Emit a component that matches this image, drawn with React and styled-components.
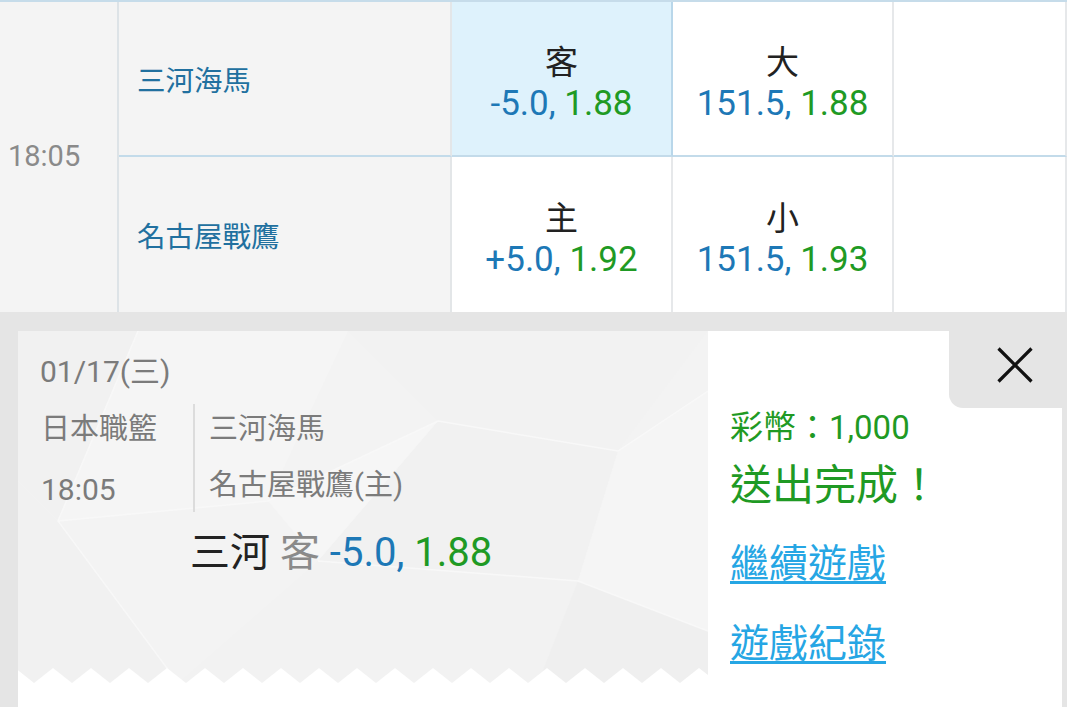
import React from "react"
import styled, { createGlobalStyle } from "styled-components"

const FONT = `Roboto, "Noto Sans CJK TC", sans-serif`
const BLUE = "#1d78b6"
const GREEN = "#1f9a24"
const LINK = "#26a6e4"

const GlobalStyle = createGlobalStyle`
  html, body {
    margin: 0;
    padding: 0;
    width: 1067px;
    height: 707px;
    overflow: hidden;
    background: #e5e5e5;
    font-family: ${FONT};
  }
  * { box-sizing: border-box; }
`

const Page = styled.div`
  width: 1067px;
  height: 707px;
  display: flex;
  flex-direction: column;
`

const Table = styled.div`
  display: grid;
  grid-template-columns: 119px 333px 221px 221px 1fr;
  grid-template-rows: 155px 155px;
  border-top: 2px solid #c6dcea;
  background: #fff;
  flex: none;
`

const TimeCell = styled.div`
  grid-row: 1 / span 2;
  background: #f4f4f4;
  border-right: 2px solid #dde3e7;
  display: flex;
  align-items: center;
  padding-left: 8px;
  padding-bottom: 2px;
  font-size: 29px;
  color: #8a8a8a;
`

const TeamCell = styled.div`
  background: #f4f4f4;
  border-right: 2px solid #e3e6e8;
  border-bottom: ${p => (p.$top ? "2px solid #c3dbea" : "none")};
  display: flex;
  align-items: center;
  padding-left: 18px;
  padding-top: ${p => (p.$top ? "0" : "0")};
  font-size: 28.5px;
  color: #21709f;
`

const OddsCell = styled.div`
  background: ${p => (p.$active ? "#def2fc" : "#fff")};
  border-right: 2px solid ${p => (p.$active ? "#b9d7ea" : "#e6e8ea")};
  border-bottom: ${p => (p.$top ? "2px solid #c3dbea" : "none")};
  display: flex;
  flex-direction: column;
  align-items: center;
  justify-content: center;
  padding-top: ${p => (p.$top ? "9px" : "9px")};
`

const OddsLabel = styled.div`
  font-size: 33px;
  line-height: 41px;
  color: #222;
`

const OddsValue = styled.div`
  font-size: 35px;
  line-height: 41px;
`

const Num = styled.span`
  color: ${p => (p.$green ? GREEN : BLUE)};
`

const Bottom = styled.div`
  flex: 1;
  padding: 19px 5px 0 18px;
  display: flex;
  min-height: 0;
`

const Card = styled.div`
  flex: 1;
  background: #fff;
  display: flex;
  align-items: flex-start;
`

const Receipt = styled.div`
  position: relative;
  width: 690px;
  height: 352px;
  background: #f3f3f3;
  padding: 21px 0 0 22px;
  overflow: hidden;
`

const Pattern = styled.svg`
  position: absolute;
  left: 0;
  top: 0;
  width: 690px;
  height: 352px;
`

const Zigzag = styled.svg`
  position: absolute;
  left: 0;
  bottom: 0;
  width: 690px;
  height: 15px;
`

const ReceiptBody = styled.div`
  position: relative;
  color: #7b7b7b;
`

const DateLine = styled.div`
  font-size: 30px;
  line-height: 40px;
`

const InfoRow = styled.div`
  display: flex;
  margin-top: 12px;
`

const LeagueCol = styled.div`
  width: 153px;
  padding-left: 1px;
  display: flex;
  flex-direction: column;
  gap: 23px;
  padding-top: 6px;
`

const TeamsCol = styled.div`
  border-left: 2px solid #dcdcdc;
  padding-left: 14px;
  display: flex;
  flex-direction: column;
  gap: 18px;
  padding-top: 6px;
  padding-bottom: 8px;
`

const InfoText = styled.div`
  font-size: ${p => p.$size || 29}px;
  line-height: 38px;
  color: #7b7b7b;
`

const BetLine = styled.div`
  margin-top: 18px;
  padding-left: 150px;
  font-size: 40px;
  line-height: 46px;
`

const Dark = styled.span`
  color: #222;
`

const Grey = styled.span`
  color: #8a8a8a;
`

const Side = styled.div`
  flex: 1;
  display: flex;
  flex-direction: column;
`

const CloseRow = styled.div`
  display: flex;
  justify-content: flex-end;
`

const CloseButton = styled.button`
  width: 113px;
  height: 77px;
  border: none;
  background: #e5e5e5;
  border-bottom-left-radius: 14px;
  display: flex;
  align-items: center;
  justify-content: center;
  padding: 0 0 9px 18px;
  cursor: pointer;
`

const SideBody = styled.div`
  padding-left: 22px;
  display: flex;
  flex-direction: column;
`

const Coins = styled.div`
  font-size: 33px;
  line-height: 40px;
  color: ${GREEN};
`

const Done = styled.div`
  margin-top: 12px;
  font-size: 42px;
  line-height: 52px;
  color: ${GREEN};
`

const NavLink = styled.a`
  font-size: 39px;
  line-height: 48px;
  color: ${LINK};
  text-decoration: underline;
  text-decoration-thickness: 3px;
  text-underline-offset: 4px;
  margin-top: ${p => p.$gap}px;
  align-self: flex-start;
`

const teeth = Array.from({ length: 20 }, (_, i) => i * 38 - 3)

const Odds = ({ label, line, price, active, top }) => (
  <OddsCell $active={active} $top={top}>
    <OddsLabel>{label}</OddsLabel>
    <OddsValue>
      <Num>{line}, </Num>
      <Num $green>{price}</Num>
    </OddsValue>
  </OddsCell>
)

const App = () => (
  <Page>
    <GlobalStyle />
    <Table>
      <TimeCell>18:05</TimeCell>
      <TeamCell $top>三河海馬</TeamCell>
      <Odds label="客" line="-5.0" price="1.88" active top />
      <Odds label="大" line="151.5" price="1.88" top />
      <OddsCell $top />
      <TeamCell>名古屋戰鷹</TeamCell>
      <Odds label="主" line="+5.0" price="1.92" />
      <Odds label="小" line="151.5" price="1.93" />
      <OddsCell />
    </Table>

    <Bottom>
      <Card>
        <Receipt>
          <Pattern viewBox="0 0 690 352">
            <polygon points="0,0 120,0 40,190 0,150" fill="#f1f1f1" />
            <polygon points="120,0 330,0 250,170 40,190" fill="#f5f5f5" />
            <polygon points="330,0 690,0 600,120 420,90" fill="#f2f2f2" />
            <polygon points="420,90 600,120 560,250 300,230" fill="#f1f1f1" />
            <polygon points="600,120 690,60 690,300 560,250" fill="#f5f5f5" />
            <polygon points="0,150 40,190 160,352 0,352" fill="#f1f1f1" />
            <polygon points="250,170 420,90 300,230" fill="#f6f6f6" />
            <polygon points="300,230 560,250 520,352 160,352" fill="#f2f2f2" />
            <polygon points="560,250 690,300 690,352 520,352" fill="#efefef" />
            <polyline points="40,190 250,170 420,90 600,120 690,60" fill="none" stroke="#f8f8f8" strokeWidth="1.5" />
            <polyline points="120,0 40,190 160,352" fill="none" stroke="#f8f8f8" strokeWidth="1.5" />
            <polyline points="300,230 560,250 690,300" fill="none" stroke="#f8f8f8" strokeWidth="1.5" />
          </Pattern>
          <Zigzag viewBox="0 0 690 15">
            {teeth.map(x => (
              <polygon key={x} points={`${x - 19},15 ${x},0 ${x + 19},15`} fill="#fff" />
            ))}
          </Zigzag>
          <ReceiptBody>
            <DateLine>01/17(三)</DateLine>
            <InfoRow>
              <LeagueCol>
                <InfoText>日本職籃</InfoText>
                <InfoText $size={30}>18:05</InfoText>
              </LeagueCol>
              <TeamsCol>
                <InfoText>三河海馬</InfoText>
                <InfoText>名古屋戰鷹(主)</InfoText>
              </TeamsCol>
            </InfoRow>
            <BetLine>
              <Dark>三河</Dark> <Grey>客</Grey> <Num>-5.0,</Num> <Num $green>1.88</Num>
            </BetLine>
          </ReceiptBody>
        </Receipt>

        <Side>
          <CloseRow>
            <CloseButton aria-label="close">
              <svg width="36" height="36" viewBox="0 0 36 36">
                <path d="M1.5 1.5 L34.5 34.5 M34.5 1.5 L1.5 34.5" stroke="#111" strokeWidth="3.2" />
              </svg>
            </CloseButton>
          </CloseRow>
          <SideBody>
            <Coins>彩幣：1,000</Coins>
            <Done>送出完成！</Done>
            <NavLink href="#" $gap={28}>繼續遊戲</NavLink>
            <NavLink href="#" $gap={32}>遊戲紀錄</NavLink>
          </SideBody>
        </Side>
      </Card>
    </Bottom>
  </Page>
)

export default App
